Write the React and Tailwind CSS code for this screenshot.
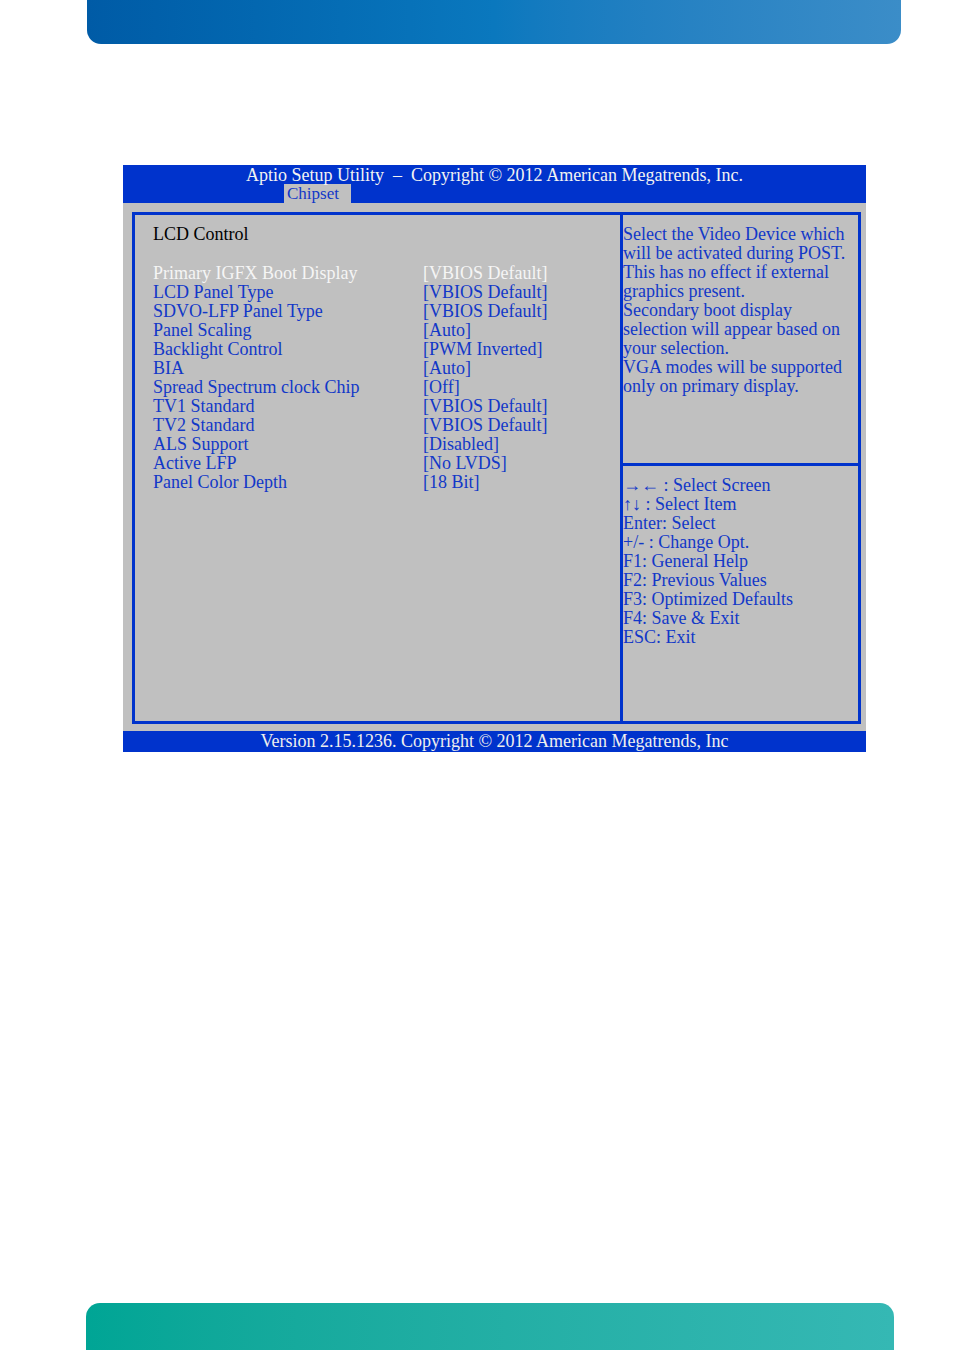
import React from 'react';

const rows = [
  ['Primary IGFX Boot Display', '[VBIOS Default]', true],
  ['LCD Panel Type', '[VBIOS Default]'],
  ['SDVO-LFP Panel Type', '[VBIOS Default]'],
  ['Panel Scaling', '[Auto]'],
  ['Backlight Control', '[PWM Inverted]'],
  ['BIA', '[Auto]'],
  ['Spread Spectrum clock Chip', '[Off]'],
  ['TV1 Standard', '[VBIOS Default]'],
  ['TV2 Standard', '[VBIOS Default]'],
  ['ALS Support', '[Disabled]'],
  ['Active LFP', '[No LVDS]'],
  ['Panel Color Depth', '[18 Bit]'],
];

const helpText = [
  'Select the Video Device which',
  'will be activated during POST.',
  'This has no effect if external',
  'graphics present.',
  'Secondary boot display',
  'selection will appear based on',
  'your selection.',
  'VGA modes will be supported',
  'only on primary display.',
];

const keys = [
  '\u2192\u2190 : Select Screen',
  '\u2191\u2193 : Select Item',
  'Enter: Select',
  '+/- : Change Opt.',
  'F1: General Help',
  'F2: Previous Values',
  'F3: Optimized Defaults',
  'F4: Save & Exit',
  'ESC: Exit',
];

const serif = { fontFamily: '"Liberation Serif", "Times New Roman", serif' };

const BiosScreen = () => {
  return (
    <div className="ml-[123px] mt-[121px] w-[743px]" style={serif}>
      {/* header */}
      <div className="h-[38px] bg-[#0033cc] text-[18px] leading-[19px] text-[#f2f2f2]">
        <div className="h-[19px] pt-[1px] text-center">
          Aptio Setup Utility &nbsp;&ndash;&nbsp; Copyright &copy; 2012 American Megatrends, Inc.
        </div>
        <div className="ml-[161px] w-[67px] h-[19px] bg-[#c0c0c0] text-[17px] text-[#1238c8] pl-[3px]">Chipset</div>
      </div>

      {/* body */}
      <div className="bg-[#c0c0c0] pl-[9px] pr-[5px] pt-[9px] pb-[7px]">
        <div className="flex h-[512px] border-[3px] border-[#0033cc] text-[18px] leading-[19px] text-[#1238c8]">
          <div className="w-[485px] pl-[18px] pt-[10px]">
            <div className="text-black">LCD Control</div>
            <div className="mt-[20px] grid grid-cols-[270px_1fr]">
              {rows.map(([label, value, active]) => (
                <React.Fragment key={label}>
                  <div className={active ? 'text-[#f5f5f5]' : ''}>{label}</div>
                  <div className={active ? 'text-[#f5f5f5]' : ''}>{value}</div>
                </React.Fragment>
              ))}
            </div>
          </div>
          <div className="flex flex-1 flex-col border-l-[3px] border-[#0033cc]">
            <div className="h-[248px] pt-[10px]">
              {helpText.map((line) => (
                <div key={line} className="whitespace-nowrap">{line}</div>
              ))}
            </div>
            <div className="flex-1 border-t-[3px] border-[#0033cc] pt-[10px]">
              {keys.map((line) => (
                <div key={line} className="whitespace-nowrap">{line}</div>
              ))}
            </div>
          </div>
        </div>
      </div>

      {/* footer */}
      <div className="h-[21px] bg-[#0033cc] text-center text-[18px] leading-[21px] text-[#eeeeee]">
        Version 2.15.1236. Copyright &copy; 2012 American Megatrends, Inc
      </div>
    </div>
  );
};

export default function App() {
  return (
    <div className="flex h-[1350px] w-[954px] flex-col overflow-hidden bg-white">
      <div className="ml-[87px] h-[44px] w-[814px] shrink-0 rounded-b-[14px] bg-linear-to-r from-[#005ba6] via-[#0a78be] to-[#3b8dc8]" />
      <BiosScreen />
      <div className="mt-auto ml-[86px] h-[47px] w-[808px] shrink-0 rounded-t-[14px] bg-linear-to-r from-[#00a595] to-[#35b8b4]" />
    </div>
  );
}
